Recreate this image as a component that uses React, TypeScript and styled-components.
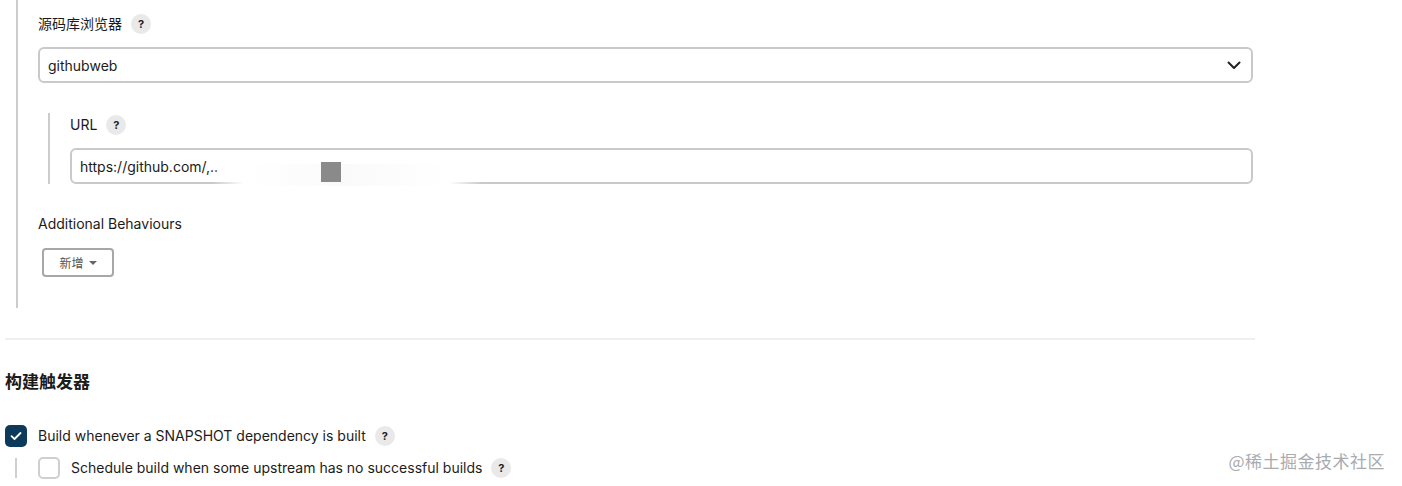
import React from "react";
import styled, { createGlobalStyle } from "styled-components";

const Global = createGlobalStyle`
  html, body { margin: 0; padding: 0; background: #fff; }
  body {
    font-family: Inter, "Liberation Sans", Arial, "Noto Sans CJK SC", sans-serif;
    color: #1b1b1b;
    font-size: 14px;
  }
`;

const Page = styled.div`
  position: relative;
  width: 1402px;
  height: 486px;
  overflow: hidden;
  padding-left: 5px;
  box-sizing: border-box;
`;

const Nested = styled.div<{ $ml: number; $pt: number; $pb: number }>`
  margin-left: ${(p) => p.$ml}px;
  border-left: 2px solid #cccccc;
  padding: ${(p) => p.$pt}px 0 ${(p) => p.$pb}px 20px;
`;

const OuterBody = styled.div`
  width: 1215px;
  display: flex;
  flex-direction: column;
`;

const LabelRow = styled.div<{ $mb: number }>`
  display: flex;
  align-items: center;
  gap: 9px;
  height: 20px;
  line-height: 18px;
  margin-bottom: ${(p) => p.$mb}px;
  font-size: 14px;
  color: #1b1b1b;
`;

const Help = styled.span`
  display: inline-flex;
  align-items: center;
  justify-content: center;
  width: 20px;
  height: 20px;
  border-radius: 50%;
  background: #e9e9ea;
  color: #222;
  font-size: 11px;
  font-weight: 700;
  flex-shrink: 0;
`;

const SelectBox = styled.div`
  height: 36px;
  box-sizing: border-box;
  border: 2px solid #c9c9cb;
  border-radius: 6px;
  display: flex;
  align-items: center;
  justify-content: space-between;
  padding: 0 10px 0 8px;
  font-size: 14px;
  color: #1b1b1b;
`;

const InputBox = styled.div`
  position: relative;
  height: 36px;
  box-sizing: border-box;
  border: 2px solid #c9c9cb;
  border-radius: 6px;
  display: flex;
  align-items: center;
  padding: 0 8px;
  font-size: 14px;
  color: #1b1b1b;
`;

const Smear = styled.span`
  position: absolute;
  left: 140px;
  bottom: -4px;
  width: 270px;
  height: 22px;
  background: linear-gradient(90deg, rgba(255,255,255,0) 0%, #fff 12%, #fafafa 50%, #fff 88%, rgba(255,255,255,0) 100%);
`;

const Block = styled.span`
  position: absolute;
  left: 249px;
  top: 12px;
  width: 20px;
  height: 20px;
  background: #8a8a8a;
`;

const Spacer = styled.div<{ $h: number }>`
  height: ${(p) => p.$h}px;
`;

const AddButton = styled.button`
  margin-left: 4px;
  width: 72px;
  height: 29px;
  box-sizing: border-box;
  border: 2px solid #a4a8ab;
  border-radius: 4px;
  background: #fff;
  color: #555;
  font-family: inherit;
  font-size: 12px;
  display: flex;
  align-items: center;
  justify-content: center;
  gap: 5px;
  padding: 0;
`;

const Caret = styled.span`
  width: 0;
  height: 0;
  border-left: 4px solid transparent;
  border-right: 4px solid transparent;
  border-top: 4px solid #666;
`;

const Divider = styled.div`
  width: 1250px;
  height: 2px;
  background: #efeff0;
  margin-top: 30px;
`;

const Heading = styled.h2`
  margin: 32px 0 0;
  height: 20px;
  line-height: 20px;
  font-size: 17px;
  font-weight: 700;
  color: #1b1b1b;
`;

const CheckRow = styled.div<{ $mt: number }>`
  display: flex;
  align-items: center;
  height: 22px;
  line-height: 20px;
  margin-top: ${(p) => p.$mt}px;
  font-size: 14px;
  color: #1b1b1b;
`;

const Box = styled.span<{ $checked?: boolean }>`
  width: 22px;
  height: 22px;
  box-sizing: border-box;
  border-radius: 5px;
  display: inline-flex;
  align-items: center;
  justify-content: center;
  background: ${(p) => (p.$checked ? "#0c3a5a" : "#fff")};
  border: ${(p) => (p.$checked ? "none" : "2px solid #cfcfd1")};
  margin-right: 11px;
  flex-shrink: 0;
`;

const HelpGap = styled.span`
  width: 9px;
`;

const SubRow = styled.div`
  display: flex;
  align-items: stretch;
  margin-top: 10px;
`;

const SubBar = styled.span`
  width: 2px;
  height: 20px;
  margin: 1px 21px 0 10px;
  background: #cfcfd1;
`;

const Watermark = styled.div`
  position: absolute;
  right: 17px;
  top: 448px;
  font-family: "Noto Sans CJK SC", sans-serif;
  font-size: 17px;
  color: #a9abaf;
  letter-spacing: 0.5px;
`;

const Check = () => (
  <svg width="12" height="10" viewBox="0 0 12 10" fill="none">
    <path d="M1.5 5.2L4.5 8L10.5 2" stroke="#fff" strokeWidth="1.8" strokeLinecap="round" strokeLinejoin="round" />
  </svg>
);

const Chevron = () => (
  <svg width="14" height="9" viewBox="0 0 14 9" fill="none">
    <path d="M1.5 1.5L7 7L12.5 1.5" stroke="#222" strokeWidth="2" strokeLinecap="round" strokeLinejoin="round" />
  </svg>
);

export default function App() {
  return (
    <>
      <Global />
      <Page>
        <Nested $ml={11} $pt={14} $pb={31}>
          <OuterBody>
            <LabelRow $mb={13}>
              源码库浏览器 <Help>?</Help>
            </LabelRow>
            <SelectBox>
              <span>githubweb</span>
              <Chevron />
            </SelectBox>
            <Spacer $h={30} />
            <Nested $ml={10} $pt={2} $pb={0}>
              <LabelRow $mb={13}>
                URL <Help>?</Help>
              </LabelRow>
              <InputBox>
                https://github.com/,..
                <Smear />
                <Block />
              </InputBox>
            </Nested>
            <Spacer $h={30} />
            <LabelRow $mb={14}>Additional Behaviours</LabelRow>
            <AddButton>
              新增 <Caret />
            </AddButton>
          </OuterBody>
        </Nested>
        <Divider />
        <Heading>构建触发器</Heading>
        <CheckRow $mt={33}>
          <Box $checked>
            <Check />
          </Box>
          Build whenever a SNAPSHOT dependency is built
          <HelpGap />
          <Help>?</Help>
        </CheckRow>
        <SubRow>
          <SubBar />
          <CheckRow $mt={0}>
            <Box />
            Schedule build when some upstream has no successful builds
            <HelpGap />
            <Help>?</Help>
          </CheckRow>
        </SubRow>
        <Watermark>@稀土掘金技术社区</Watermark>
      </Page>
    </>
  );
}
